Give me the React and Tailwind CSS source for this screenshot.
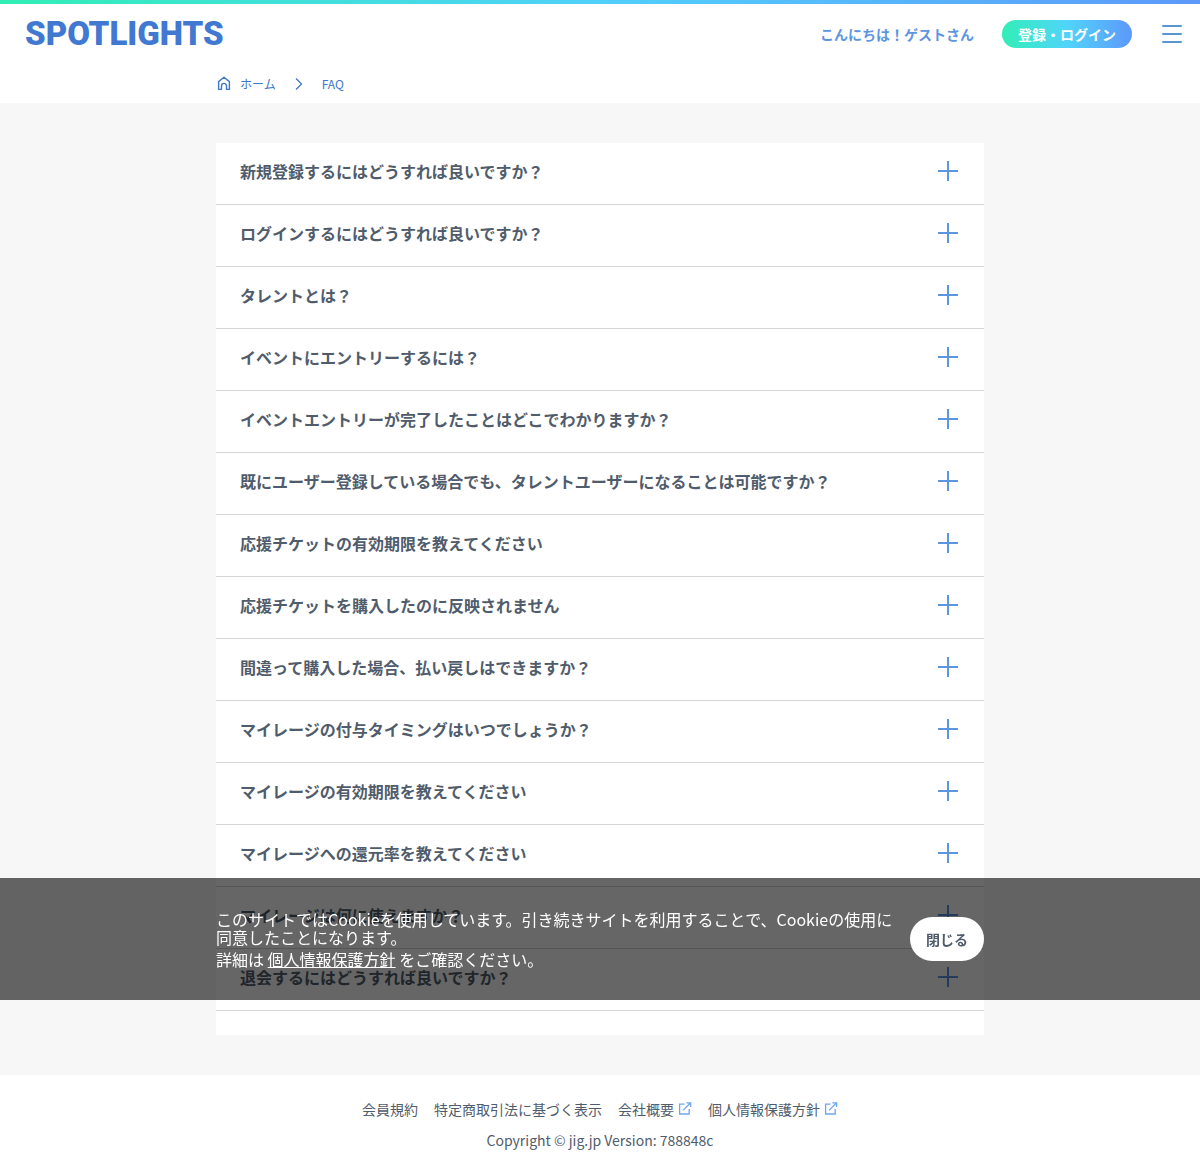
import React, { useState } from "react";

const questions = [
    "新規登録するにはどうすれば良いですか？",
    "ログインするにはどうすれば良いですか？",
    "タレントとは？",
    "イベントにエントリーするには？",
    "イベントエントリーが完了したことはどこでわかりますか？",
    "既にユーザー登録している場合でも、タレントユーザーになることは可能ですか？",
    "応援チケットの有効期限を教えてください",
    "応援チケットを購入したのに反映されません",
    "間違って購入した場合、払い戻しはできますか？",
    "マイレージの付与タイミングはいつでしょうか？",
    "マイレージの有効期限を教えてください",
    "マイレージへの還元率を教えてください",
    "マイレージは何に使えますか？",
    "退会するにはどうすれば良いですか？",
];

const footerLinks = [
    { label: "会員規約" },
    { label: "特定商取引法に基づく表示" },
    { label: "会社概要", external: true },
    { label: "個人情報保護方針", external: true },
];

function HomeIcon() {
    return (
        <svg className="size-4" viewBox="0 0 16 16" fill="none" stroke="currentColor" strokeWidth="1.4" strokeLinejoin="round">
            <path d="M2.6 5.6 8 1.2l5.4 4.4v7.8h-2.9V9.9a2.5 2.5 0 0 0-5 0v3.5H2.6z" />
        </svg>
    );
}

function ExternalIcon() {
    return (
        <svg className="size-[14px] text-[#6ea6ee]" viewBox="0 0 14 14" fill="none" stroke="currentColor" strokeWidth="1.3">
            <path d="M6.5 2.2H1.6v9.8h9.6V7.1M5 8.4l7.4-7.4M8.4 0.8h4.2V5" />
        </svg>
    );
}

// 質問1件分の行
function FaqItem({ question }) {
    const [open, setOpen] = useState(false);

    return (
        <li className="border-b border-[#d5d5d5]">
            <button
                type="button"
                className="flex w-full cursor-pointer items-start justify-between gap-4 px-6 pt-4 pb-[21px] text-left font-bold leading-6"
                aria-expanded={open}
                onClick={() => setOpen(!open)}
            >
                {question}
                <svg className="size-6 shrink-0 text-[#5c95e0]" viewBox="0 0 24 24" fill="none" stroke="currentColor" strokeWidth="2">
                    <path d={open ? "M2 12h20" : "M2 12h20M12 2v20"} />
                </svg>
            </button>
        </li>
    );
}

// Cookie使用の通知バー
function CookieBar({ onClose }) {
    return (
        <div className="fixed inset-x-0 bottom-[165px] bg-black/60 py-8 text-white">
            <div className="mx-auto flex max-w-3xl items-center justify-between gap-4">
                <div className="space-y-1 leading-[18px]">
                    <p>このサイトではCookieを使用しています。引き続きサイトを利用することで、Cookieの使用に同意したことになります。</p>
                    <p>
                        詳細は <a href="#" className="underline">個人情報保護方針</a> をご確認ください。
                    </p>
                </div>
                <button
                    type="button"
                    className="h-11 shrink-0 cursor-pointer rounded-full bg-white px-4 text-sm font-bold text-[#505c6c]"
                    onClick={onClose}
                >
                    閉じる
                </button>
            </div>
        </div>
    );
}

function App() {
    const [showCookie, setShowCookie] = useState(true);

    return (
        <div className="min-h-screen bg-white font-['Noto_Sans_CJK_JP',sans-serif] text-base text-[#505c6c]">
            <div className="h-1 bg-linear-to-r from-[#31eeb5] via-[#50d0fa] to-[#5c98fa]" />
            <header className="flex h-15 items-center justify-between pr-4 pl-[25px]">
                <a href="#" className="font-[Roboto,sans-serif] text-[33px] font-black text-[#4078d2]">SPOTLIGHTS</a>
                <div className="flex items-center gap-7">
                    <a href="#" className="text-sm font-bold text-[#5c95e0]">こんにちは！ゲストさん</a>
                    <button
                        type="button"
                        className="h-7 cursor-pointer rounded-full bg-linear-to-r from-[#31eeb5] via-[#50d4fa] to-[#5c98fa] px-4 text-sm font-bold text-white"
                    >
                        登録・ログイン
                    </button>
                    <button type="button" className="cursor-pointer text-[#5796d4]" aria-label="メニュー">
                        <svg className="size-6" viewBox="0 0 24 24" stroke="currentColor" strokeWidth="2" strokeLinecap="round">
                            <path d="M3 4h18M3 12h18M3 20h18" />
                        </svg>
                    </button>
                </div>
            </header>
            <nav className="mx-auto flex h-[39px] max-w-3xl items-center gap-4 text-xs text-[#4078c8]">
                <a href="#" className="flex items-center gap-2">
                    <HomeIcon />
                    ホーム
                </a>
                <svg className="size-[14px]" viewBox="0 0 14 14" fill="none" stroke="currentColor" strokeWidth="1.3">
                    <path d="m4 1.5 5.5 5.5L4 12.5" />
                </svg>
                <span>FAQ</span>
            </nav>

            <main className="bg-[#f7f7f7] py-10">
                <ul className="mx-auto max-w-3xl bg-white pb-6">
                    {questions.map((question) => (
                        <FaqItem key={question} question={question} />
                    ))}
                </ul>
            </main>

            <footer className="flex flex-col items-center gap-[11px] pt-6 pb-[15px] text-sm leading-5">
                <ul className="flex flex-wrap justify-center gap-4">
                    {footerLinks.map((link) => (
                        <li key={link.label}>
                            <a href="#" className="flex items-center gap-1">
                                {link.label}
                                {link.external && <ExternalIcon />}
                            </a>
                        </li>
                    ))}
                </ul>
                <p>Copyright © jig.jp Version: 788848c</p>
            </footer>

            {showCookie && <CookieBar onClose={() => setShowCookie(false)} />}
        </div>
    );
}

export default App;
